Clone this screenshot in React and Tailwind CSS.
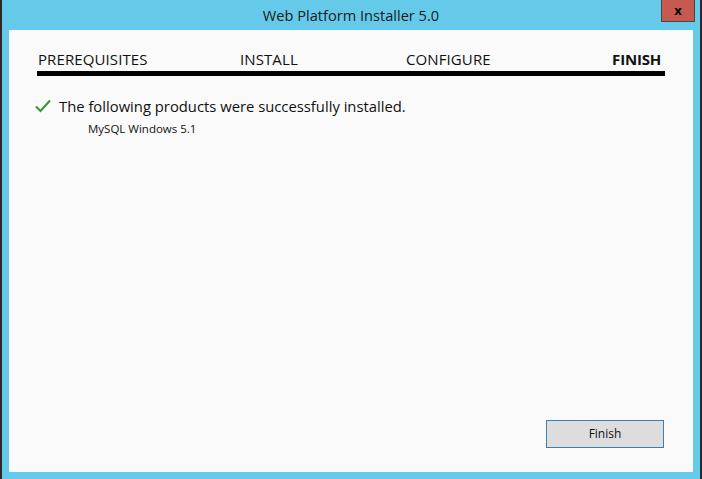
export default function App() {
  const font = { fontFamily: '"Open Sans", "Noto Sans", Arial, sans-serif' };
  return (
    <div className="w-[702px] h-[479px] bg-[#65caea] border-x-2 border-l-[#2b2b2b] border-r-[#2b2b2b] flex flex-col relative overflow-hidden" style={font}>
      <div className="h-[30px] flex items-center justify-center text-[14.6px] text-[#1a1a1a] shrink-0 pt-[1px]">
        Web Platform Installer 5.0
      </div>
      <div className="absolute left-[659px] top-0 w-[34px] h-[22px] bg-[#c75a50] border border-[#474747] border-t-0 flex items-center justify-center text-[13px] font-bold text-black leading-none">
        x
      </div>
      <div className="ml-[7px] mr-[7px] mb-[7px] flex-1 bg-[#fafafa] flex flex-col">
        <div className="ml-[29px] mr-[32px] mt-[17px] flex items-end text-[15px] text-[#111] leading-none h-[20px] tracking-[0.1px]">
          <span className="w-[202px] shrink-0">PREREQUISITES</span>
          <span className="w-[166px] shrink-0">INSTALL</span>
          <span className="flex-1">CONFIGURE</span>
          <span className="font-bold tracking-[-0.2px]">FINISH</span>
        </div>
        <div className="mx-[28px] mt-[4px] h-[5px] bg-black" />
        <div className="mt-[19px] ml-[26px] flex items-center gap-[8px] text-[14.8px] text-[#111]">
          <svg width="16" height="14" viewBox="0 0 16 14">
            <path d="M1 7.5 L5.5 12 L15 1.5" fill="none" stroke="#3b963b" strokeWidth="2.2" />
          </svg>
          <span>The following products were successfully installed.</span>
        </div>
        <div className="ml-[79px] mt-[3px] text-[11.5px] text-[#111]">MySQL Windows 5.1</div>
        <div className="flex-1" />
        <div className="flex justify-end mr-[29px] mb-[24px]">
          <div className="w-[118px] h-[28px] border border-[#3c7fb1] bg-[#dddddd] flex items-center justify-center text-[12px] text-[#111]">
            Finish
          </div>
        </div>
      </div>
    </div>
  );
}
